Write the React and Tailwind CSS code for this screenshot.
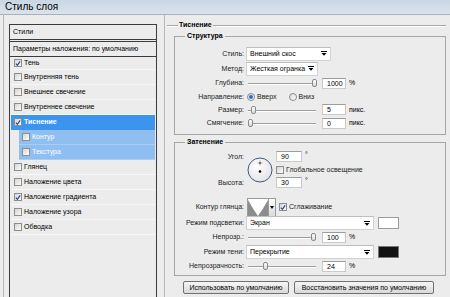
import React from 'react'

const items = [
  { t: 'Тень', on: true, kind: 'first' },
  { t: 'Внутренняя тень' },
  { t: 'Внешнее свечение' },
  { t: 'Внутреннее свечение' },
  { t: 'Тиснение', on: true, kind: 'sel' },
  { t: 'Контур', kind: 'sub' },
  { t: 'Текстура', kind: 'sub' },
  { t: 'Глянец' },
  { t: 'Наложение цвета' },
  { t: 'Наложение градиента', on: true },
  { t: 'Наложение узора' },
  { t: 'Обводка' },
]

const rowCls = {
  first: 'h-[13px] mx-[1px] pl-[3px] border-b border-[#f7f7f7] text-black',
  normal: 'h-[15px] mx-[1px] pl-[3px] border-b border-[#f7f7f7] text-black',
  sel: 'h-[15px] mx-[1px] pl-[3px] border-b border-[#3b95ee] bg-[#3b95ee] text-white font-bold',
  sub: 'h-[15px] ml-[9px] mr-[1px] pl-[3px] border-b border-[#a9cdf3] bg-[#8fbef0] text-white',
}

function Check({ on }) {
  return (
    <span className="w-[8px] h-[8px] shrink-0 border border-[#8d8d8d] bg-linear-to-br from-[#d6d6d6] to-[#fbfbfb] flex items-center justify-center">
      {on && (
        <svg width="7" height="7" viewBox="0 0 7 7">
          <path d="M1 3.6 L2.8 5.6 L6 1" stroke="#244a8a" strokeWidth="1.4" fill="none" />
        </svg>
      )}
    </span>
  )
}

function Arrow() {
  return (
    <svg width="6" height="5" viewBox="0 0 6 5">
      <rect x="0" y="0" width="6" height="1" fill="#000" />
      <path d="M0.5 2 H5.5 L3 4.8 Z" fill="#000" />
    </svg>
  )
}

function Select({ text, cls }) {
  return (
    <div className={`h-[14px] bg-white border border-[#d2d2d2] border-t-[#bdbdbd] flex items-center justify-between pl-[3px] pr-[3px] text-black whitespace-nowrap ${cls}`}>
      <span>{text}</span>
      <Arrow />
    </div>
  )
}

function Slider({ thumb }) {
  return (
    <div className="relative w-[68px] h-[10px] ml-[2px]">
      <div className="absolute left-0 right-0 top-[5px] h-px bg-[#9d9d9d] shadow-[0_1px_0_#fff]" />
      <div className={`absolute top-[1px] w-[5px] h-[8px] rounded-[2px] border border-[#8a8a8a] bg-linear-to-b from-white to-[#d8d8d8] ${thumb}`} />
    </div>
  )
}

function Num({ v, cls = 'w-[24px]' }) {
  return (
    <div className={`h-[11px] bg-white border border-[#cacaca] border-t-[#9c9c9c] text-[7px] leading-[9px] pl-[4px] text-black ${cls}`}>
      {v}
    </div>
  )
}

function Row({ h = 'h-[14px]', label, children }) {
  return (
    <div className={`flex items-center ${h}`}>
      <div className="w-[69px] text-right text-[#222] whitespace-nowrap">{label}</div>
      <div className="ml-[2px] flex items-center whitespace-nowrap">{children}</div>
    </div>
  )
}

function Radio({ on }) {
  return (
    <span className="w-[8px] h-[8px] rounded-full border border-[#8a8a8a] bg-linear-to-br from-[#d8d8d8] to-white flex items-center justify-center">
      {on && <span className="w-[4px] h-[4px] rounded-full bg-[#2f6ec8]" />}
    </span>
  )
}

function Btn({ children, cls }) {
  return (
    <div className={`h-[13px] rounded-[2px] border border-[#707070] bg-linear-to-b from-[#f6f6f6] to-[#d9d9d9] flex items-center justify-center text-black whitespace-nowrap ${cls}`}>
      {children}
    </div>
  )
}

export default function App() {
  return (
    <div className="w-[450px] h-[297px] overflow-hidden bg-[#ececec] flex flex-col font-['Liberation_Sans',Arial,sans-serif] text-[7px] leading-[10px]">
      {/* title bar */}
      <div className="h-[15px] shrink-0 border-b border-[#a3b3c4] bg-linear-to-b from-[#c9d6e4] to-[#dae3ec] flex items-center pl-[5px] text-[10px] text-black">
        Стиль слоя
      </div>

      <div className="flex-1 flex min-h-0">
        {/* left: style list */}
        <div className="w-[167px] shrink-0">
          <div className="ml-[3px] w-[162px] h-full border-l border-r border-[#b9b9b9] pt-[9px] pl-[5px]">
            <div className="w-[148px] h-[300px] border border-[#3c3c3c]">
              <div className="h-[15px] border-b border-[#3c3c3c] flex items-center pl-[3px] text-black">Стили</div>
              <div className="h-[16px] mt-[1px] border-t border-b border-[#3c3c3c] flex items-center pl-[3px] text-black whitespace-nowrap">
                Параметры наложения: по умолчанию
              </div>
              {items.map((it) => (
                <div key={it.t} className={`flex items-center gap-[2px] ${rowCls[it.kind || 'normal']}`}>
                  <Check on={it.on} />
                  <span>{it.t}</span>
                </div>
              ))}
            </div>
          </div>
        </div>

        {/* right: bevel settings */}
        <div className="flex-1">
          <div className="mt-[5px] h-[10px] flex items-center w-[279px]">
            <div className="w-[11px] h-px bg-[#a6a6a6] shadow-[0_1px_0_#fff]" />
            <span className="px-[1px] font-bold text-black">Тиснение</span>
            <div className="flex-1 h-px bg-[#a6a6a6] shadow-[0_1px_0_#fff]" />
          </div>

          <fieldset className="mt-[1px] ml-[7px] w-[272px] border border-[#a6a6a6] pt-[5px] pb-[4px]">
            <legend className="ml-[10px] px-[2px] font-bold text-black leading-[10px]">Структура</legend>
            <Row h="h-[15px]" label="Стиль:">
              <Select text="Внешний скос" cls="w-[85px]" />
            </Row>
            <Row h="h-[15px]" label="Метод:">
              <Select text="Жесткая огранка" cls="w-[72px]" />
            </Row>
            <Row label="Глубина:">
              <Slider thumb="left-[64px]" />
              <Num v="1000" cls="w-[24px] ml-[6px]" />
              <span className="ml-[3px]">%</span>
            </Row>
            <Row h="h-[13px]" label="Направление:">
              <span className="ml-[1px]"><Radio on /></span>
              <span className="ml-[2px] text-[#222]">Вверх</span>
              <span className="ml-[12px]"><Radio /></span>
              <span className="ml-[2px] text-[#222]">Вниз</span>
            </Row>
            <Row h="h-[13px]" label="Размер:">
              <Slider thumb="left-[3px]" />
              <Num v="5" cls="w-[24px] ml-[6px]" />
              <span className="ml-[3px]">пикс.</span>
            </Row>
            <Row label="Смягчение:">
              <Slider thumb="left-0" />
              <Num v="0" cls="w-[24px] ml-[6px]" />
              <span className="ml-[3px]">пикс.</span>
            </Row>
          </fieldset>

          <fieldset className="mt-[2px] ml-[7px] w-[272px] border border-[#a6a6a6] pt-[3px] pb-[2px]">
            <legend className="ml-[10px] px-[2px] font-bold text-black leading-[10px]">Затенение</legend>
            <div className="flex">
              <div className="w-[69px] flex flex-col text-right text-[#222]">
                <div className="h-[13px] flex items-center justify-end">Угол:</div>
                <div className="h-[13px]" />
                <div className="h-[13px] flex items-center justify-end">Высота:</div>
              </div>
              <div className="ml-[3px] flex items-center">
                <svg width="26" height="26" viewBox="0 0 26 26">
                  <defs>
                    <radialGradient id="dial" cx="40%" cy="35%" r="70%">
                      <stop offset="0" stopColor="#ffffff" />
                      <stop offset="1" stopColor="#e2e2e2" />
                    </radialGradient>
                  </defs>
                  <circle cx="13" cy="13" r="12" fill="url(#dial)" stroke="#3c5a86" strokeWidth="1" />
                  <path d="M13 3.5 V8.5 M10.5 6 H15.5" stroke="#9a9a9a" strokeWidth="0.8" />
                  <circle cx="13" cy="6" r="0.9" fill="#555" />
                  <circle cx="13" cy="14.5" r="1.3" fill="#000" />
                </svg>
              </div>
              <div className="ml-[3px] flex flex-col">
                <div className="h-[13px] flex items-center">
                  <Num v="90" cls="w-[26px]" />
                  <span className="ml-[3px] self-start text-[7px]">°</span>
                </div>
                <div className="h-[13px] flex items-center gap-[2px]">
                  <Check />
                  <span className="text-[#222] whitespace-nowrap">Глобальное освещение</span>
                </div>
                <div className="h-[13px] flex items-center">
                  <Num v="30" cls="w-[26px]" />
                  <span className="ml-[3px] self-start text-[7px]">°</span>
                </div>
              </div>
            </div>

            <div className="mt-[9px] h-[18px] flex items-center">
              <div className="w-[69px] text-right text-[#222] whitespace-nowrap">Контур глянца:</div>
              <div className="ml-[3px] flex items-center">
                <svg width="20" height="17" viewBox="0 0 20 17" className="border border-[#9a9a9a] box-content">
                  <rect width="20" height="17" fill="#8c8c8c" />
                  <path d="M0 0 H20 V1 Q15 10 10 17 Q5 10 0 1 Z" fill="#ffffff" />
                </svg>
                <div className="w-[7px] h-[19px] border border-l-0 border-[#9a9a9a] bg-linear-to-b from-white to-[#dadada] flex items-center justify-center">
                  <svg width="4" height="3" viewBox="0 0 4 3"><path d="M0 0 H4 L2 3 Z" fill="#000" /></svg>
                </div>
              </div>
              <div className="ml-[3px] flex items-center gap-[2px]">
                <Check on />
                <span className="text-[#222]">Сглаживание</span>
              </div>
            </div>

            <Row label="Режим подсветки:">
              <Select text="Экран" cls="w-[128px]" />
              <div className="ml-[4px] w-[21px] h-[12px] bg-white border border-[#9c9c9c]" />
            </Row>
            <Row label="Непрозр.:">
              <Slider thumb="left-[63px]" />
              <Num v="100" cls="w-[24px] ml-[6px]" />
              <span className="ml-[3px]">%</span>
            </Row>
            <div className="mt-[1px]">
              <Row label="Режим тени:">
                <Select text="Перекрытие" cls="w-[128px]" />
                <div className="ml-[4px] w-[21px] h-[12px] bg-[#111] border border-[#777]" />
              </Row>
            </div>
            <Row label="Непрозрачность:">
              <Slider thumb="left-[15px]" />
              <Num v="24" cls="w-[24px] ml-[6px]" />
              <span className="ml-[3px]">%</span>
            </Row>
          </fieldset>

          <div className="mt-[5px] ml-[16px] flex">
            <Btn cls="w-[106px]">Использовать по умолчанию</Btn>
            <Btn cls="w-[140px] ml-[5px]">Восстановить значения по умолчанию</Btn>
          </div>
        </div>
      </div>
    </div>
  )
}
